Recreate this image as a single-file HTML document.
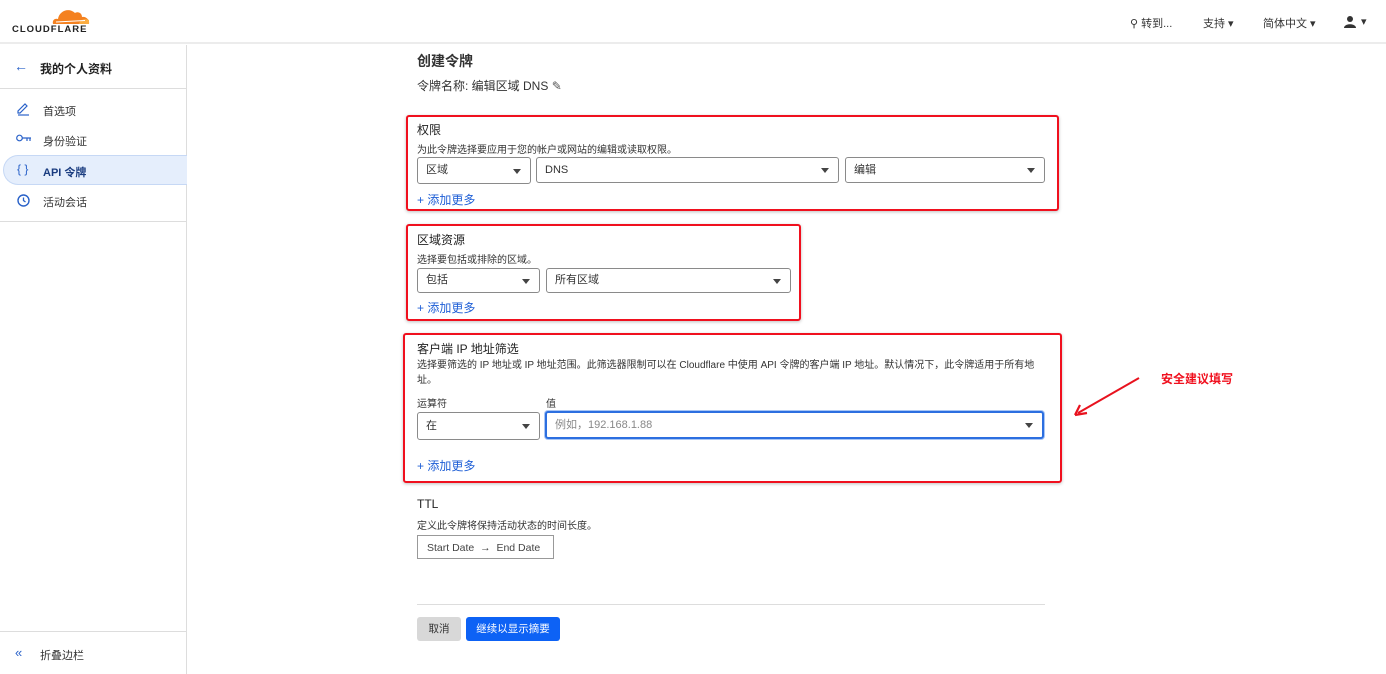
<!DOCTYPE html>
<html><head><meta charset="utf-8"><style>
*{box-sizing:border-box;margin:0;padding:0}
body{width:1386px;height:674px;overflow:hidden;background:#fff;font-family:"Liberation Sans","Noto Sans CJK SC",sans-serif;color:#222;position:relative;font-size:12px}
.a{position:absolute}
.sel{position:absolute;border:1px solid #8a8a8a;border-radius:3px;background:#fff;font-size:11px;color:#333;padding-left:8px;line-height:25px}
.sel:after{content:"";position:absolute;right:9px;top:50%;margin-top:-2px;border-left:4px solid transparent;border-right:4px solid transparent;border-top:5px solid #444}
.red{position:absolute;border:2px solid #f0101e;border-radius:3px;box-shadow:0 1px 3px rgba(0,0,0,.25)}
.add{position:absolute;color:#1f5fd6;font-size:12px}
.nav{position:absolute;left:43px;font-size:11px;color:#333}
</style></head><body>
<div class="a" style="left:0;top:0;width:1386px;height:44px;border-bottom:2px solid #ececec"></div>
<svg class="a" style="left:50px;top:7px" width="40" height="18" viewBox="0 0 40 18"><path d="M3 17 C2 13 5 11 8 12 C9 4 19 0 25 6 C28 4 32 6 32 10 C36 9 40 13 39 17Z" fill="#f48120"/><path d="M29 17 C30 13 34 11 39 13 L39 17Z" fill="#fbad41"/><path d="M6 15 L35 13.5" stroke="#fff" stroke-width="1"/></svg>
<div class="a" style="left:12px;top:24px;font-size:9.5px;font-weight:bold;letter-spacing:1px;color:#222">CLOUDFLARE</div>
<div class="a" style="left:1130px;top:15px;font-size:11px;color:#333">⚲ 转到...</div>
<div class="a" style="left:1203px;top:15px;font-size:11px;color:#333">支持 ▾</div>
<div class="a" style="left:1263px;top:15px;font-size:11px;color:#333">简体中文 ▾</div>
<svg class="a" style="left:1344px;top:16px" width="14" height="12"><circle cx="6" cy="3" r="3" fill="#333"/><path d="M0 12 C0 7 12 7 12 12Z" fill="#333"/></svg>
<div class="a" style="left:1361px;top:15px;font-size:11px;color:#333">▾</div>
<div class="a" style="left:186px;top:45px;width:1px;height:629px;background:#ddd"></div>
<div class="a" style="left:14px;top:58px;color:#2a62c9;font-size:14px">←</div>
<div class="a" style="left:40px;top:60px;font-size:12px;font-weight:bold;color:#222">我的个人资料</div>
<div class="a" style="left:0;top:88px;width:186px;height:1px;background:#ddd"></div>
<svg class="a" style="left:16px;top:102px" width="14" height="14"><path d="M2 11 L2 9 L9 2 L11 4 L4 11Z" fill="none" stroke="#2a62c9" stroke-width="1.2"/><path d="M2 13 H13" stroke="#2a62c9" stroke-width="1.2"/></svg>
<div class="nav" style="top:103px">首选项</div>
<svg class="a" style="left:16px;top:134px" width="16" height="8"><circle cx="3.5" cy="4" r="2.8" fill="none" stroke="#2a62c9" stroke-width="1.2"/><path d="M6.5 4 H15 M11 4 V7 M14 4 V7" stroke="#2a62c9" stroke-width="1.2"/></svg>
<div class="nav" style="top:133px">身份验证</div>
<div class="a" style="left:3px;top:155px;width:184px;height:30px;background:#e5eefc;border:1px solid #c6d8f5;border-right:none;border-radius:15px 0 0 15px"></div>
<div class="a" style="left:17px;top:162px;color:#2a62c9;font-size:12px">{ }</div>
<div class="nav" style="top:164px;font-weight:bold;color:#1a3c80">API 令牌</div>
<svg class="a" style="left:17px;top:194px" width="13" height="13"><circle cx="6.5" cy="6.5" r="5.5" fill="none" stroke="#2a62c9" stroke-width="1.4"/><path d="M6.5 3.5V6.5L8.5 8" fill="none" stroke="#2a62c9" stroke-width="1.3"/></svg>
<div class="nav" style="top:194px">活动会话</div>
<div class="a" style="left:0;top:221px;width:186px;height:1px;background:#ddd"></div>
<div class="a" style="left:0;top:631px;width:186px;height:1px;background:#ddd"></div>
<div class="a" style="left:15px;top:645px;color:#2a62c9;font-size:13px">«</div>
<div class="nav" style="left:40px;top:647px">折叠边栏</div>

<div class="a" style="left:417px;top:51px;font-size:14px;font-weight:bold;color:#333">创建令牌</div>
<div class="a" style="left:417px;top:77px;font-size:12px;color:#333">令牌名称: 编辑区域 DNS <span style="color:#555">✎</span></div>

<div class="red" style="left:406px;top:115px;width:653px;height:96px"></div>
<div class="a" style="left:417px;top:121px;font-size:12px">权限</div>
<div class="a" style="left:417px;top:141px;font-size:10px;color:#333">为此令牌选择要应用于您的帐户或网站的编辑或读取权限。</div>
<div class="sel" style="left:417px;top:157px;width:114px;height:27px">区域</div>
<div class="sel" style="left:536px;top:157px;width:303px;height:26px">DNS</div>
<div class="sel" style="left:845px;top:157px;width:200px;height:26px">编辑</div>
<div class="add" style="left:417px;top:191px">+ 添加更多</div>

<div class="red" style="left:406px;top:224px;width:395px;height:97px"></div>
<div class="a" style="left:417px;top:231px;font-size:12px">区域资源</div>
<div class="a" style="left:417px;top:251px;font-size:10px;color:#333">选择要包括或排除的区域。</div>
<div class="sel" style="left:417px;top:268px;width:123px;height:25px;line-height:23px">包括</div>
<div class="sel" style="left:546px;top:268px;width:245px;height:25px;line-height:23px">所有区域</div>
<div class="add" style="left:417px;top:299px">+ 添加更多</div>

<div class="red" style="left:403px;top:333px;width:659px;height:150px"></div>
<div class="a" style="left:417px;top:340px;font-size:12px">客户端 IP 地址筛选</div>
<div class="a" style="left:417px;top:358px;width:630px;font-size:10px;line-height:15px;color:#333">选择要筛选的 IP 地址或 IP 地址范围。此筛选器限制可以在 Cloudflare 中使用 API 令牌的客户端 IP 地址。默认情况下，此令牌适用于所有地址。</div>
<div class="a" style="left:417px;top:395px;font-size:10px;color:#333">运算符</div>
<div class="a" style="left:546px;top:395px;font-size:10px;color:#333">值</div>
<div class="sel" style="left:417px;top:412px;width:123px;height:28px;line-height:26px">在</div>
<div class="sel" style="left:545px;top:411px;width:499px;height:28px;line-height:25px;border:2px solid #2c6fe0;box-shadow:0 0 0 1px #a9c6f5;color:#888">例如，192.168.1.88</div>
<div class="add" style="left:417px;top:457px">+ 添加更多</div>

<svg class="a" style="left:1070px;top:374px" width="72" height="46"><path d="M69 4 L8 39" stroke="#e8121e" stroke-width="2"/><path d="M5 41 L17 39 M5 41 L10 31" stroke="#e8121e" stroke-width="2.2" fill="none"/></svg>
<div class="a" style="left:1161px;top:370px;font-size:12px;font-weight:bold;color:#f0101e">安全建议填写</div>

<div class="a" style="left:417px;top:497px;font-size:12px">TTL</div>
<div class="a" style="left:417px;top:517px;font-size:10px;color:#333">定义此令牌将保持活动状态的时间长度。</div>
<div class="a" style="left:417px;top:535px;width:137px;height:24px;border:1px solid #999;font-size:10.5px;color:#444;padding:6px 0 0 9px">Start Date &nbsp;→&nbsp; End Date</div>
<div class="a" style="left:417px;top:604px;width:628px;height:1px;background:#ddd"></div>
<div class="a" style="left:417px;top:617px;width:44px;height:24px;background:#d8d8d8;border-radius:3px;font-size:10.5px;color:#333;text-align:center;line-height:24px">取消</div>
<div class="a" style="left:466px;top:617px;width:94px;height:24px;background:#0d62f5;border-radius:3px;font-size:10.5px;color:#fff;text-align:center;line-height:24px">继续以显示摘要</div>
</body></html>
